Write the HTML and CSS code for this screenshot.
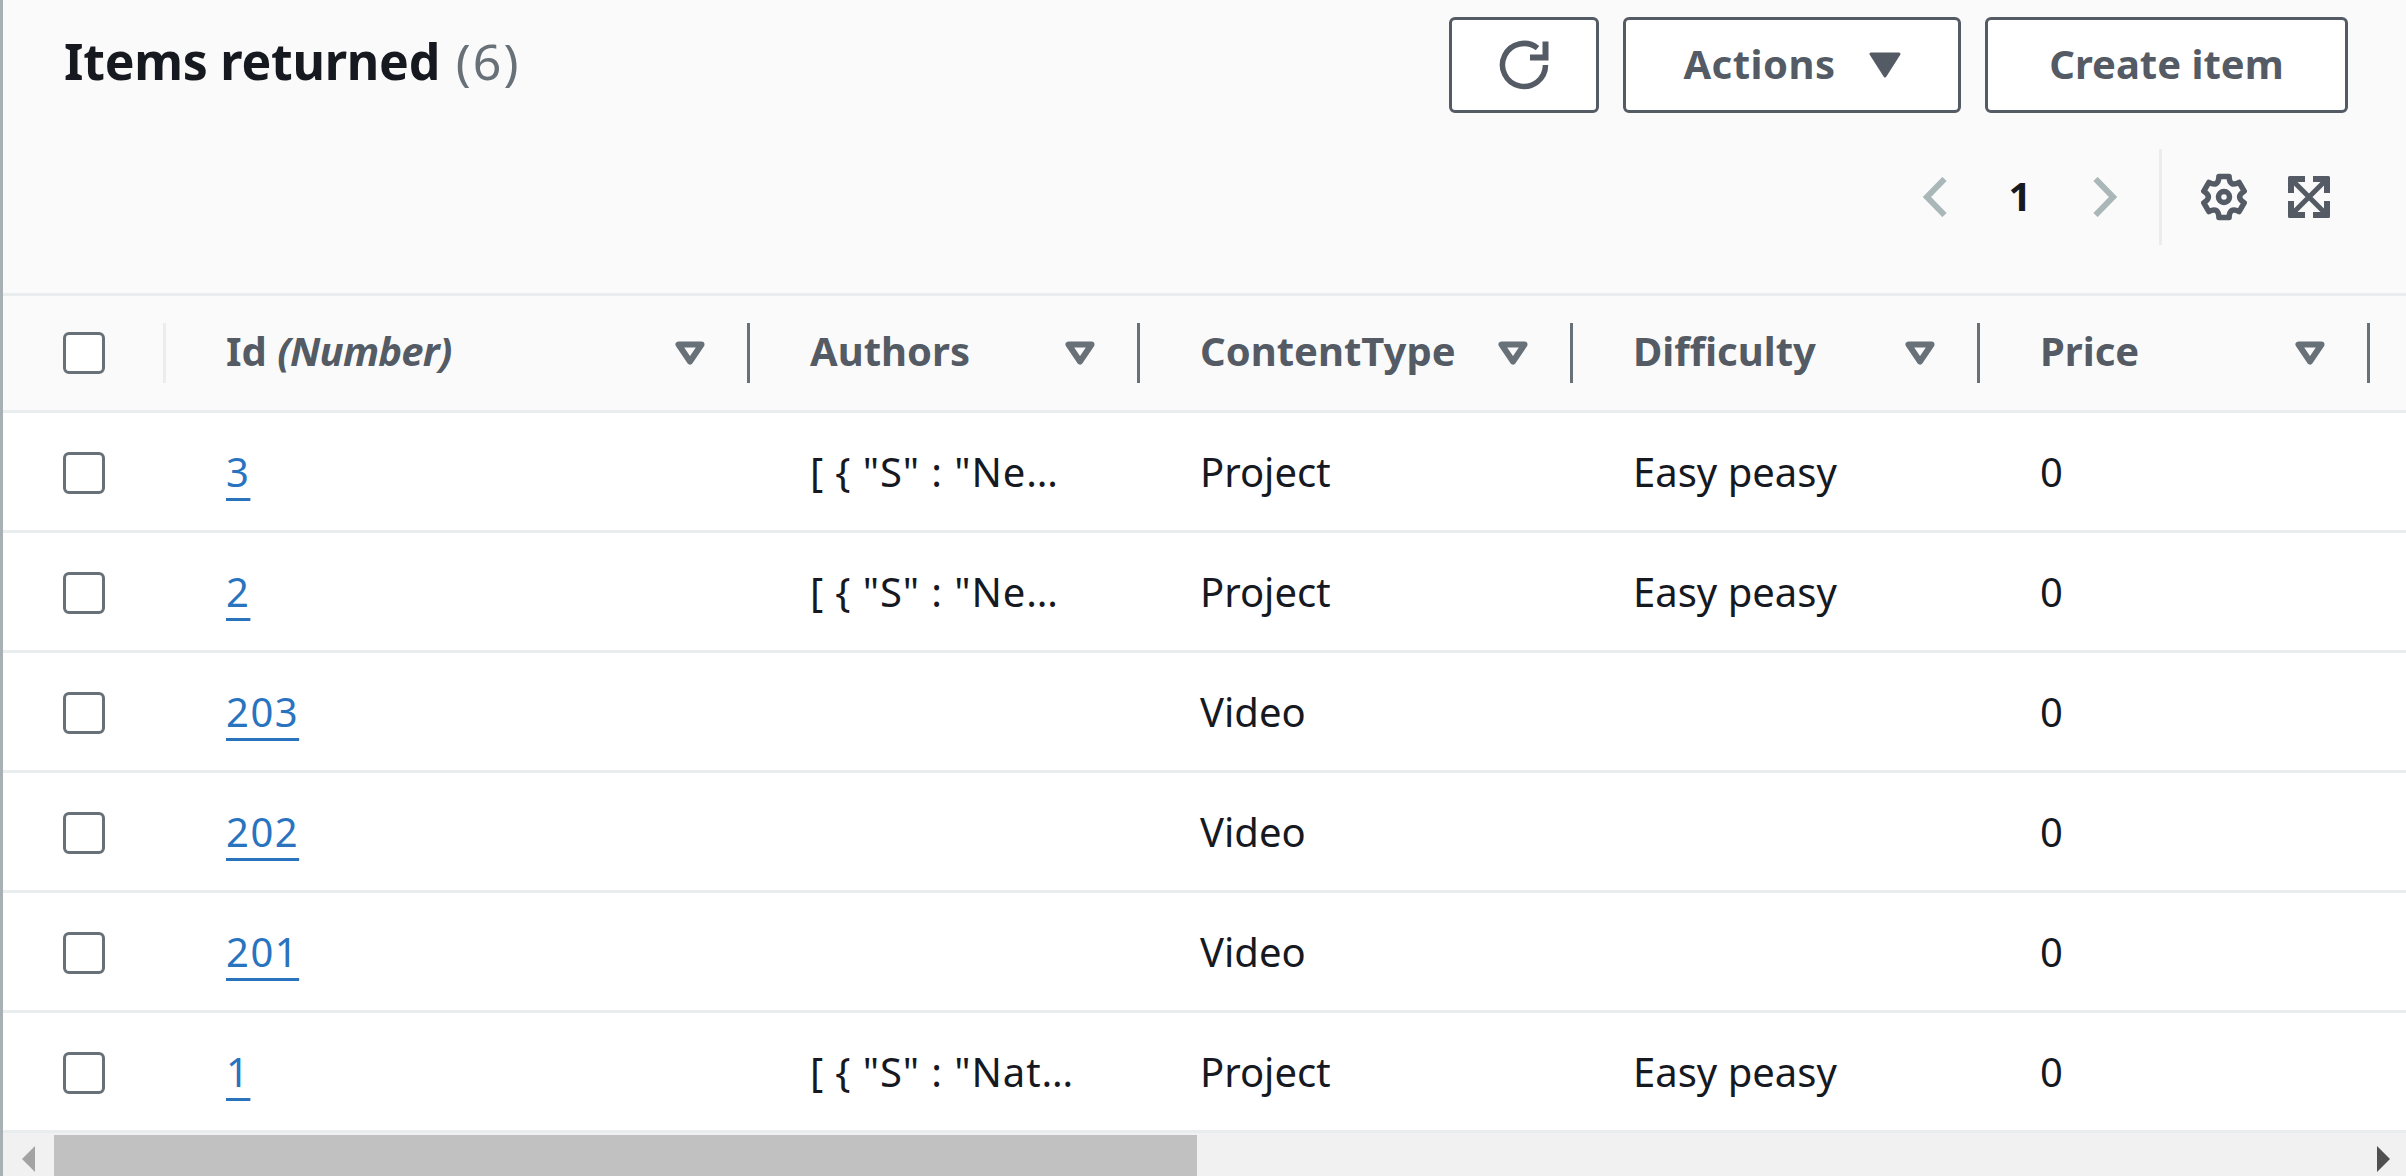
FILE: index.html
```html
<!DOCTYPE html>
<html lang="en">
<head>
  <meta charset="UTF-8">
  <title>Items returned</title>
  <link rel="stylesheet" href="styles.css">
</head>
<body>
  <div class="panel">
    <div class="panel-head">
      <div class="head-top">
        <h2 class="title">Items returned <span class="count">(6)</span></h2>
        <div class="actions">
          <button class="btn btn-icon">
            <svg width="50" height="50" viewBox="0 0 50 50" fill="none" stroke="#545b64" stroke-width="5.500">
              <path d="M46.500 25a21.500 21.500 0 1 1-8-16.800"/>
              <path d="M46.500 1.500v16H31" stroke-width="6"/>
            </svg>
          </button>
          <button class="btn btn-actions"><span class="btn-label">Actions</span>
            <svg width="32" height="26" viewBox="0 0 32 26"><path d="M2 2h28L16 24z" fill="#545b64" stroke="#545b64" stroke-width="3" stroke-linejoin="round"/></svg>
          </button>
          <button class="btn btn-create"><span class="btn-label">Create item</span></button>
        </div>
      </div>
      <div class="head-tools">
        <svg class="chev" width="24" height="40" viewBox="0 0 24 40" fill="none" stroke="#aab7b8" stroke-width="6"><path d="M21.500 2L4 20l17.500 18"/></svg>
        <span class="page-num">1</span>
        <svg class="chev" width="24" height="40" viewBox="0 0 24 40" fill="none" stroke="#aab7b8" stroke-width="6"><path d="M2.500 2L20 20 2.500 38"/></svg>
        <span class="tools-sep"></span>
        <svg class="gear" width="48" height="48" viewBox="0 0 48 48" fill="none" stroke="#545b64" stroke-width="5.500" stroke-linejoin="round">
          <circle cx="24" cy="24" r="5.500"/>
          <path d="M18.900 3.600L29.100 3.600Q29.500 14.500 39.100 9.400L44.200 18.200Q35 24 44.200 29.800L39.100 38.600Q29.500 33.500 29.100 44.400L18.900 44.400Q18.500 33.500 8.900 38.600L3.800 29.800Q13 24 3.800 18.200L8.900 9.400Q18.500 14.500 18.900 3.600Z"/>
        </svg>
        <svg class="expand" width="42" height="42" viewBox="0 0 42 42" fill="none" stroke="#545b64">
          <path d="M0 1.500a1.500 1.500 0 0 1 1.500-1.500H17v6H6v11H0zM42 1.500A1.500 1.500 0 0 0 40.500 0H25v6h11v11h6zM0 40.500A1.500 1.500 0 0 0 1.500 42H17v-6H6V25H0zM42 40.500a1.500 1.500 0 0 1-1.500 1.500H25v-6h11V25h6z" fill="#545b64" stroke="none"/>
          <path d="M5 5l32 32M37 5L5 37" stroke-width="5"/>
        </svg>
      </div>
    </div>

    <table class="items">
      <colgroup>
        <col class="c-select"><col class="c-id"><col class="c-authors"><col class="c-type"><col class="c-diff"><col class="c-price"><col>
      </colgroup>
      <thead>
        <tr>
          <th class="cell-select"><span class="check"></span><i class="sep sep-light"></i></th>
          <th><div class="th-in"><span class="th-label">Id <em>(Number)</em></span><svg class="filter" width="30" height="24" viewBox="0 0 30 24" fill="none" stroke="#687078" stroke-width="6" stroke-linejoin="round"><path d="M3.500 3.500h23L15 20.500z"/></svg></div><i class="sep"></i></th>
          <th><div class="th-in"><span class="th-label">Authors</span><svg class="filter" width="30" height="24" viewBox="0 0 30 24" fill="none" stroke="#687078" stroke-width="6" stroke-linejoin="round"><path d="M3.500 3.500h23L15 20.500z"/></svg></div><i class="sep"></i></th>
          <th><div class="th-in"><span class="th-label">ContentType</span><svg class="filter" width="30" height="24" viewBox="0 0 30 24" fill="none" stroke="#687078" stroke-width="6" stroke-linejoin="round"><path d="M3.500 3.500h23L15 20.500z"/></svg></div><i class="sep"></i></th>
          <th><div class="th-in"><span class="th-label">Difficulty</span><svg class="filter" width="30" height="24" viewBox="0 0 30 24" fill="none" stroke="#687078" stroke-width="6" stroke-linejoin="round"><path d="M3.500 3.500h23L15 20.500z"/></svg></div><i class="sep"></i></th>
          <th><div class="th-in"><span class="th-label">Price</span><svg class="filter" width="30" height="24" viewBox="0 0 30 24" fill="none" stroke="#687078" stroke-width="6" stroke-linejoin="round"><path d="M3.500 3.500h23L15 20.500z"/></svg></div><i class="sep"></i></th>
          <th></th>
        </tr>
      </thead>
      <tbody>
        <tr><td class="cell-select"><span class="check"></span></td><td><a href="#">3</a></td><td class="json">[ { "S" : "Ne…</td><td>Project</td><td>Easy peasy</td><td>0</td><td></td></tr>
        <tr><td class="cell-select"><span class="check"></span></td><td><a href="#">2</a></td><td class="json">[ { "S" : "Ne…</td><td>Project</td><td>Easy peasy</td><td>0</td><td></td></tr>
        <tr><td class="cell-select"><span class="check"></span></td><td><a href="#">203</a></td><td></td><td>Video</td><td></td><td>0</td><td></td></tr>
        <tr><td class="cell-select"><span class="check"></span></td><td><a href="#">202</a></td><td></td><td>Video</td><td></td><td>0</td><td></td></tr>
        <tr><td class="cell-select"><span class="check"></span></td><td><a href="#">201</a></td><td></td><td>Video</td><td></td><td>0</td><td></td></tr>
        <tr><td class="cell-select"><span class="check"></span></td><td><a href="#">1</a></td><td class="json">[ { "S" : "Nat…</td><td>Project</td><td>Easy peasy</td><td>0</td><td></td></tr>
      </tbody>
    </table>

    <div class="hscroll">
      <span class="arrow arrow-left"></span>
      <div class="track"><div class="thumb"></div></div>
      <span class="arrow arrow-right"></span>
    </div>
  </div>
</body>
</html>
```

FILE: styles.css
```css
* { margin: 0; padding: 0; box-sizing: border-box; }
html, body { height: 100%; }
body {
  font-family: "Noto Sans", sans-serif;
  background: #fff;
  color: #16191f;
  overflow: hidden;
}
.panel {
  height: 1176px;
  border-left: 3px solid #a9b0b3;
  display: flex;
  flex-direction: column;
}
.panel-head {
  height: 293px;
  background: #fafafa;
  padding: 17px 58px 0 61px;
}
.head-top {
  display: flex;
  justify-content: space-between;
  align-items: flex-start;
}
.title {
  font-size: 50px;
  line-height: 60px;
  font-weight: 700;
  letter-spacing: -0.25px;
  margin-top: 14px;
}
.count { font-weight: 400; color: #687078; letter-spacing: 2px; margin-left: 3px; }
.actions { display: flex; gap: 24px; }
.btn {
  height: 96px;
  border: 3px solid #545b64;
  border-radius: 6px;
  background: #fff;
  color: #545b64;
  font: 700 40px "Noto Sans", sans-serif;
  display: flex;
  align-items: center;
  justify-content: center;
}
.btn-label { margin-bottom: 3px; }
.btn-icon { width: 150px; }
.btn-actions { width: 338px; gap: 33px; }
.btn-actions .btn-label { letter-spacing: 0.5px; }
.btn-create { width: 363px; }
.head-tools {
  display: flex;
  align-items: center;
  margin-top: 36px;
  height: 96px;
  justify-content: flex-end;
  padding-right: 18px;
}
.page-num {
  font-size: 40px;
  font-weight: 700;
  width: 146px;
  text-align: center;
  margin-bottom: 4px;
}
.tools-sep {
  width: 3px;
  height: 96px;
  background: #eaeded;
  margin: 0 38px 0 42px;
}
.expand { margin-left: 40px; }

.items {
  width: 100%;
  table-layout: fixed;
  border-collapse: separate;
  border-spacing: 0;
}
.c-select { width: 163px; }
.c-id { width: 584px; }
.c-authors { width: 390px; }
.c-type { width: 433px; }
.c-diff { width: 407px; }
.c-price { width: 390px; }
.items th {
  position: relative;
  height: 120px;
  background: #fafafa;
  border-top: 3px solid #eaeded;
  border-bottom: 3px solid #eaeded;
  padding-left: 60px;
  padding-right: 45px;
  text-align: left;
  font-size: 40px;
  font-weight: 700;
  color: #545b64;
  white-space: nowrap;
}
.items th em { font-style: italic; letter-spacing: -0.8px; }
.th-in {
  display: flex;
  justify-content: space-between;
  align-items: center;
}
.th-label { margin-bottom: 5px; }
.sep {
  position: absolute;
  right: 0;
  top: 27px;
  width: 3px;
  height: 60px;
  background: #687078;
}
.sep-light { background: #eaeded; }
.items td {
  height: 120px;
  border-bottom: 3px solid #eaeded;
  padding-left: 60px;
  font-size: 40px;
  white-space: nowrap;
}
.items td.json { letter-spacing: 0.9px; }
.items a {
  color: #2a73bf;
  letter-spacing: 1.5px;
  text-decoration-thickness: 3px;
  text-underline-offset: 11px;
}
.items .cell-select { padding-left: 60px; padding-right: 0; }
.check {
  display: block;
  width: 42px;
  height: 42px;
  border: 3.5px solid #687078;
  border-radius: 6px;
  background: #fff;
}
.items td .check { margin-top: 3px; }

.hscroll {
  flex: 1;
  display: flex;
  background: #f1f1f1;
  position: relative;
  min-height: 0;
}
.track { flex: 1; padding: 2px 0 0 51px; }
.thumb { width: 1143px; height: 100%; background: #c1c1c1; }
.arrow {
  position: absolute;
  top: 13px;
  width: 0;
  height: 0;
  border-top: 13px solid transparent;
  border-bottom: 13px solid transparent;
}
.arrow-left { left: 19px; border-right: 13px solid #a3a3a3; }
.arrow-right { right: 16px; border-left: 13px solid #505050; }
```
